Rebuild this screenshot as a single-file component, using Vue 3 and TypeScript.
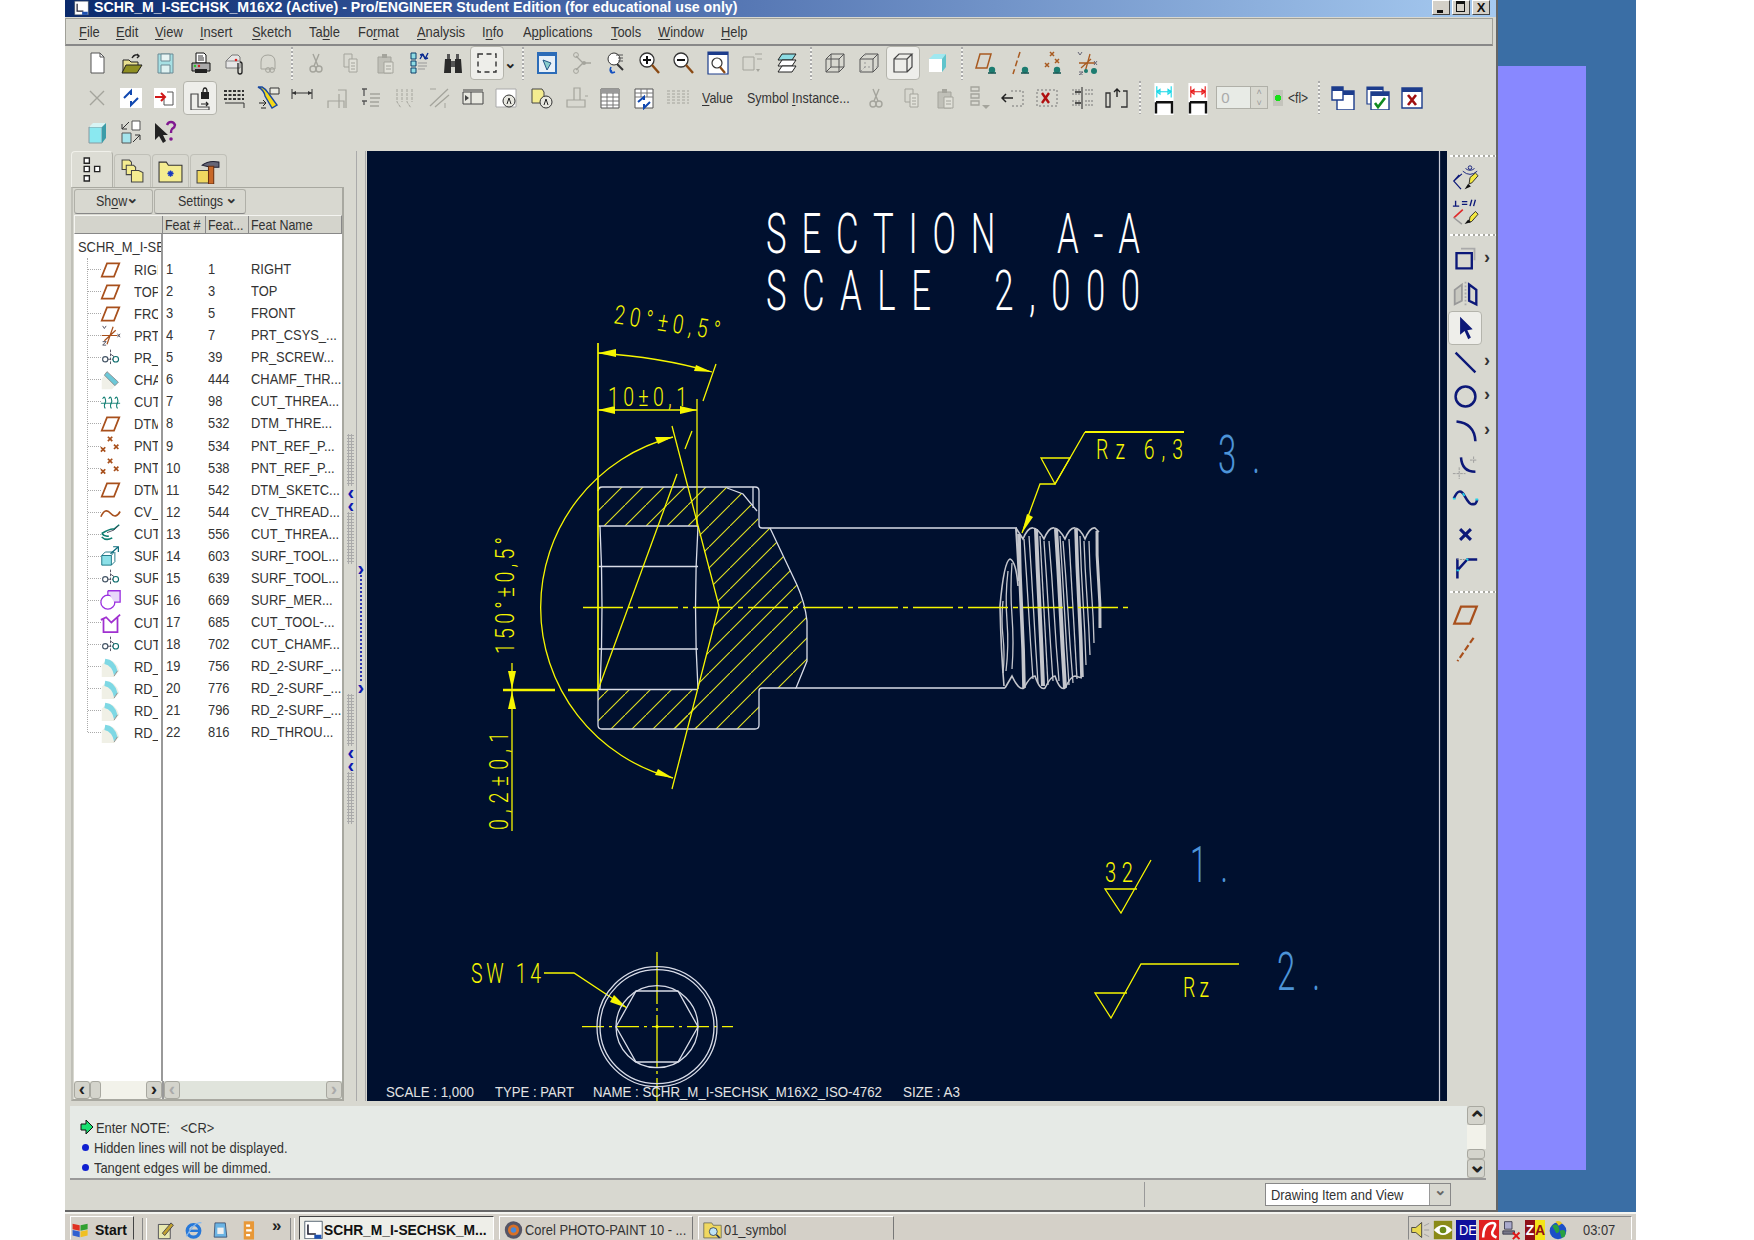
<script setup lang="ts">
import { computed } from "vue";

type BarItem = { k: string; n?: string; t?: string; sel?: boolean };

const icon = (n: string, sel = false): BarItem => ({ k: "i", n, sel });
const sep: BarItem = { k: "s" };

const menus = [
  ["", "F", "ile"], ["", "E", "dit"], ["", "V", "iew"], ["", "I", "nsert"], ["", "S", "ketch"],
  ["Ta", "b", "le"], ["Fo", "r", "mat"], ["", "A", "nalysis"], ["I", "n", "fo"],
  ["A", "p", "plications"], ["", "T", "ools"], ["", "W", "indow"], ["", "H", "elp"],
];

const row1: BarItem[] = [
  icon("new"), icon("open"), icon("save"), icon("print"), icon("mailclip"), icon("mailgray"), sep,
  icon("cut"), icon("copy"), icon("paste"), icon("tree"), icon("binoc"), icon("dash", true), { k: "c" }, sep,
  icon("refit"), icon("node"), icon("spin"), icon("zoomin"), icon("zoomout"), icon("zoomfit"), icon("annot"), icon("layers"), sep,
  icon("wire"), icon("hidden"), icon("nohid", true), icon("shade"), sep,
  icon("vplane"), icon("vaxis"), icon("vpoint"), icon("vcsys"),
];
const row2: BarItem[] = [
  icon("x"), icon("regen"), icon("redarrow"), icon("lock", true), icon("dotsrow"), icon("flash"), icon("dimh"), icon("dimd"),
  icon("ab"), icon("thread"), icon("slash"), icon("frame"), icon("note"), icon("foldera"), icon("datumt"), icon("table"),
  icon("tableref"), icon("rows"),
  { k: "t", t: "Value", n: "V" }, { k: "t", t: "Symbol Instance..." },
  icon("cut"), icon("copy"), icon("paste"), icon("stack"), icon("moveleft"), icon("delbox"), icon("align"), icon("bracket"), sep,
  icon("hcyan"), icon("hred"), { k: "spin" }, { k: "led" }, { k: "fl" }, sep,
  icon("winnew"), icon("wincheck"), icon("winx"),
];
const row3 = [icon("cube"), icon("resize"), icon("help")];

const tabs = ["tree3", "folders", "foldstar", "hammer"];

const rows = [
  ["RIGHT", 1, 1, "RIGHT", "plane"], ["TOP_", 2, 3, "TOP", "plane"], ["FRONT", 3, 5, "FRONT", "plane"],
  ["PRT_CSYS", 4, 7, "PRT_CSYS_...", "csys"], ["PR_SCREW", 5, 39, "PR_SCREW...", "group"],
  ["CHAMF", 6, 444, "CHAMF_THR...", "chamf"], ["CUT_T", 7, 98, "CUT_THREA...", "cthread"],
  ["DTM_T", 8, 532, "DTM_THRE...", "plane"], ["PNT_R", 9, 534, "PNT_REF_P...", "pnts"],
  ["PNT_R", 10, 538, "PNT_REF_P...", "pnts"], ["DTM_S", 11, 542, "DTM_SKETC...", "plane"],
  ["CV_TH", 12, 544, "CV_THREAD...", "curve"], ["CUT_T", 13, 556, "CUT_THREA...", "helix"],
  ["SURF_", 14, 603, "SURF_TOOL...", "surf"], ["SURF_", 15, 639, "SURF_TOOL...", "group"],
  ["SURF_", 16, 669, "SURF_MER...", "merge"], ["CUT_T", 17, 685, "CUT_TOOL-...", "cuttool"],
  ["CUT_C", 18, 702, "CUT_CHAMF...", "group"], ["RD_2-", 19, 756, "RD_2-SURF_...", "round"],
  ["RD_2-", 20, 776, "RD_2-SURF_...", "round"], ["RD_2-", 21, 796, "RD_2-SURF_...", "round"],
  ["RD_TH", 22, 816, "RD_THROU...", "round"],
] as [string, number, number, string, string][];

const sideTools = [
  { k: "g1" }, { n: "sketchint" }, { n: "sketchcon" }, { k: "g2" },
  { n: "sbox", more: true }, { n: "smirror" }, { n: "sarrow", sel: true }, { n: "sline", more: true },
  { n: "scircle", more: true }, { n: "sarc", more: true }, { n: "sfillet" }, { n: "sspline" }, { n: "spoint" },
  { n: "schamfer" }, { k: "g3" }, { n: "plane" }, { n: "saxis" },
];

const messages = ["Hidden lines will not be displayed.", "Tangent edges will be dimmed."];

const quick = ["qnote", "qie", "qwin", "qbar"];
const tray = ["tspeak", "tnv", "tde", "tav", "tpc", "tza", "tglobe"];

// drawing text: x, baseline y, font size, horizontal squeeze, rotation, overall width
type Label = { t: string; x: number; y: number; s: number; sx: number; r?: number; w: number; c: string };
const white = "#ffffff";
const yellow = "#f6f600";
const blue = "#4d94d8";
const labels: Label[] = [
  { t: "SECTION\u00a0\u00a0A-A", x: 766, y: 252, s: 56, sx: 0.62, w: 374, c: white },
  { t: "SCALE\u00a0\u00a02,000", x: 766, y: 309, s: 56, sx: 0.62, w: 374, c: white },
  { t: "20°±0,5°", x: 613, y: 322, s: 26, sx: 0.75, r: 9, w: 107, c: yellow },
  { t: "10±0,1", x: 608, y: 405, s: 26, sx: 0.75, w: 79, c: yellow },
  { t: "150°±0,5°", x: 514, y: 653, s: 26, sx: 0.75, r: -90, w: 117, c: yellow },
  { t: "0,2±0,1", x: 508, y: 829, s: 26, sx: 0.75, r: -90, w: 98, c: yellow },
  { t: "Rz\u00a06,3", x: 1096, y: 458, s: 27, sx: 0.72, w: 87, c: yellow },
  { t: "3.", x: 1218, y: 472, s: 53, sx: 0.62, w: 42, c: blue },
  { t: "32", x: 1105, y: 881, s: 28, sx: 0.72, w: 28, c: yellow },
  { t: "1.", x: 1190, y: 881, s: 50, sx: 0.62, w: 38, c: blue },
  { t: "2.", x: 1277, y: 989, s: 53, sx: 0.62, w: 43, c: blue },
  { t: "Rz", x: 1183, y: 996, s: 27, sx: 0.72, w: 26, c: yellow },
  { t: "SW\u00a014", x: 471, y: 982, s: 27, sx: 0.72, w: 70, c: yellow },
];
const footer = [
  { t: "SCALE : 1,000", x: 386, w: 88 },
  { t: "TYPE : PART", x: 495, w: 79 },
  { t: "NAME : SCHR_M_I-SECHSK_M16X2_ISO-4762", x: 593, w: 289 },
  { t: "SIZE : A3", x: 903, w: 57 },
];

const labelTransform = (l: Label) =>
  `translate(${l.x} ${l.y}) rotate(${l.r || 0}) scale(${l.sx} 1)`;

// helical thread, crest and flank lines running down the shank
const threadLines = computed(() => {
  const crest = [
    [1019, 533, 1024, 687, 3.6], [1036, 528, 1043, 685, 4], [1056, 528, 1065, 687, 4],
    [1076, 528, 1082, 676, 3.6], [1097, 530, 1100, 627, 3],
  ];
  const flank = [
    [1024, 538, 1033, 678], [1029, 535, 1038, 682], [1044, 540, 1053, 680], [1049, 540, 1059, 680],
    [1063, 540, 1073, 682], [1069, 538, 1077, 678], [1084, 540, 1090, 654], [1089, 540, 1094, 642],
    [1008, 570, 1006, 670], [1012, 562, 1012, 668], [1003, 600, 1003, 672], [1040, 535, 1048, 684],
    [1060, 535, 1069, 684], [1080, 535, 1086, 664],
  ];
  const wobble = (x1: number, y1: number, x2: number, y2: number) => {
    const mx = (x1 + x2) / 2;
    const my = (y1 + y2) / 2;
    return `M${x1} ${y1} Q${mx - 2} ${(y1 + my) / 2} ${mx} ${my} T${x2} ${y2}`;
  };
  return [
    ...crest.map((c) => ({ d: wobble(c[0], c[1], c[2], c[3]), w: c[4] })),
    ...flank.map((f) => ({ d: wobble(f[0], f[1], f[2], f[3]), w: 1.3 })),
  ];
});
</script>

<template>
  <div class="page">
    <!-- icon sprite -->
    <svg class="sprite" aria-hidden="true">
      <defs>
        <symbol id="new" viewBox="0 0 24 24"><path d="M6 2h9l4 4v16H6z" fill="#fff" stroke="#555" /><path d="M15 2v4h4" fill="none" stroke="#555" /></symbol>
        <symbol id="open" viewBox="0 0 24 24"><path d="M4 21V9h6l2 2h7v3" fill="#e8e090" stroke="#222" /><path d="M3 22l4-8h16l-5 8z" fill="#8f8f22" stroke="#222" /><path d="M13 7q3-5 7-2m-2-2l2 2-2 2" fill="none" stroke="#222" stroke-width="1.4" /></symbol>
        <symbol id="save" viewBox="0 0 24 24"><path d="M5 3h15v19H5z" fill="#a6e0e4" stroke="#6c8a94" /><path d="M8 3h9v7H8z" fill="#e8f4f4" stroke="#6c8a94" /><path d="M8 14h9v8H8z" fill="#dff2f2" stroke="#6c8a94" /></symbol>
        <symbol id="print" viewBox="0 0 24 24"><path d="M8 2h8l2 2v8H8z" fill="#fff" stroke="#111" /><path d="M10 5h5M10 7h6M10 9h6" stroke="#333" /><path d="M4 12h18v8H4z" fill="#aaa" stroke="#111" /><path d="M7 18h12v4H7z" fill="#222" /><circle cx="7" cy="15" r="1.2" fill="#2c2" /><circle cx="11" cy="15" r="1.2" fill="#c22" /></symbol>
        <symbol id="mailclip" viewBox="0 0 24 24"><path d="M4 10l6-6h6l2 2v11H4z" fill="#e6e6e6" stroke="#777" /><path d="M4 10h14" stroke="#888" /><circle cx="14" cy="9" r="1.3" fill="#d22" /><path d="M16 12v9q0 2 2 2t2-2v-8q0-2-2-2" fill="none" stroke="#222" stroke-width="1.3" /></symbol>
        <symbol id="mailgray" viewBox="0 0 24 24"><path d="M5 11q0-7 7-7t7 7v7H5z" fill="none" stroke="#a4a49c" /><circle cx="12" cy="19" r="2.4" fill="none" stroke="#a4a49c" /><circle cx="16" cy="19" r="2.4" fill="none" stroke="#a4a49c" /></symbol>
        <symbol id="cut" viewBox="0 0 24 24"><path d="M9 3l5 12M15 3l-5 12" stroke="#a4a49c" stroke-width="1.4" /><circle cx="9" cy="18" r="3" fill="none" stroke="#a4a49c" stroke-width="1.4" /><circle cx="15" cy="18" r="3" fill="none" stroke="#a4a49c" stroke-width="1.4" /></symbol>
        <symbol id="copy" viewBox="0 0 24 24"><path d="M6 3h8v13H6z" fill="#d8d8d0" stroke="#a4a49c" /><path d="M11 8h8v13h-8z" fill="#e0e0d8" stroke="#a4a49c" /><path d="M13 12h4M13 15h4M13 18h4" stroke="#a4a49c" /></symbol>
        <symbol id="paste" viewBox="0 0 24 24"><path d="M5 6h13v16H5z" fill="#c0c0b8" stroke="#a4a49c" /><path d="M9 3h5v4H9z" fill="#a4a49c" /><path d="M11 11h9v11h-9z" fill="#e0e0d8" stroke="#a4a49c" /><path d="M13 15h5M13 18h5" stroke="#a4a49c" /></symbol>
        <symbol id="tree" viewBox="0 0 24 24"><path d="M4 2h5v6H4zM4 10h5v5H4zM4 17h5v5H4z" fill="#8fdce4" stroke="#0b3f6a" /><path d="M11 12h9M11 15h9M11 18h7" stroke="#999" /><path d="M13 8l3-5M16 3l-3 1M16 3l1 3M21 2l-3 6M18 8l3-1M18 8l-1-3" stroke="#0a2a90" stroke-width="1.4" fill="none" /></symbol>
        <symbol id="binoc" viewBox="0 0 24 24"><path d="M4 8h6v14H3zM14 8h6l1 14h-7z" fill="#2a2a2a" /><path d="M6 3h3v5H6zM15 3h3v5h-3zM10 10h4v6h-4z" fill="#555" /></symbol>
        <symbol id="dash" viewBox="0 0 24 24"><path d="M3 3h18v18H3z" fill="none" stroke="#333" stroke-width="1.4" stroke-dasharray="5 3.5" /></symbol>
        <symbol id="refit" viewBox="0 0 24 24"><path d="M2 1h20v22H2z" fill="#2c6cb8" /><path d="M4 5h16v16H4z" fill="#e8f0f8" /><path d="M8 9l8 3-4 7z" fill="#8cc" stroke="#258" /></symbol>
        <symbol id="node" viewBox="0 0 24 24"><path d="M6 5l7 7M6 19l7-7h8" stroke="#a4a49c" stroke-width="1.3" fill="none" /><circle cx="6" cy="4" r="2.4" fill="none" stroke="#a4a49c" /><circle cx="6" cy="20" r="2.4" fill="none" stroke="#a4a49c" /><circle cx="14" cy="12" r="2" fill="#a4a49c" /></symbol>
        <symbol id="spin" viewBox="0 0 24 24"><circle cx="10" cy="8" r="6" fill="#fff" stroke="#333" /><path d="M13 13l6 6" stroke="#333" stroke-width="2" /><path d="M12 4h7M14 7h5M14 10h5" stroke="#555" /><path d="M7 16q-2 4 1 6m0 0l-1-3m1 3l3-1" stroke="#1450c0" stroke-width="1.6" fill="none" /></symbol>
        <symbol id="zoomin" viewBox="0 0 24 24"><circle cx="9" cy="9" r="7" fill="#fff" stroke="#333" stroke-width="1.3" /><path d="M5 9h8M9 5v8" stroke="#111" stroke-width="2" /><path d="M14 14l7 8" stroke="#8a4a14" stroke-width="2.4" /></symbol>
        <symbol id="zoomout" viewBox="0 0 24 24"><circle cx="9" cy="9" r="7" fill="#fff" stroke="#333" stroke-width="1.3" /><path d="M5 9h8" stroke="#111" stroke-width="2" /><path d="M14 14l7 8" stroke="#8a4a14" stroke-width="2.4" /></symbol>
        <symbol id="zoomfit" viewBox="0 0 24 24"><path d="M2 1h20v22H2z" fill="#fff" stroke="#1c3c8c" stroke-width="1.2" /><path d="M2 1h20v3H2z" fill="#1c3c8c" /><circle cx="11" cy="12" r="5" fill="#fff" stroke="#333" stroke-width="1.2" /><path d="M14 16l5 6" stroke="#8a4a14" stroke-width="2.2" /></symbol>
        <symbol id="annot" viewBox="0 0 24 24"><path d="M3 6h11v13H3z" fill="none" stroke="#a4a49c" /><path d="M15 3h7M17 8h5" stroke="#a4a49c" /><path d="M16 18l2 3 2-3z" fill="#a4a49c" /></symbol>
        <symbol id="layers" viewBox="0 0 24 24"><path d="M7 3h14l-4 6H3z" fill="#8cdce4" stroke="#222" /><path d="M7 9h14l-4 6H3z" fill="#fff" stroke="#222" /><path d="M7 15h14l-4 6H3z" fill="#fff" stroke="#222" /></symbol>
        <symbol id="wire" viewBox="0 0 24 24"><path d="M3 8h13v13H3zM3 8l5-5h13l-5 5M21 3v13l-5 5M8 3v13h13M8 16l-5 5" fill="none" stroke="#555" /></symbol>
        <symbol id="hidden" viewBox="0 0 24 24"><path d="M3 8h13v13H3zM3 8l5-5h13l-5 5M21 3v13l-5 5" fill="none" stroke="#555" /><path d="M8 3v13h13M8 16l-5 5" fill="none" stroke="#999" stroke-dasharray="2 2" /></symbol>
        <symbol id="nohid" viewBox="0 0 24 24"><path d="M3 8h13v13H3zM3 8l5-5h13l-5 5M21 3v13l-5 5" fill="none" stroke="#444" stroke-width="1.2" /></symbol>
        <symbol id="shade" viewBox="0 0 24 24"><path d="M4 8h13v13H4z" fill="#fff" /><path d="M4 8l5-5h12l-4 5z" fill="#a0e8f0" /><path d="M17 8l4-5v13l-4 5z" fill="#60c4cc" /></symbol>
        <symbol id="vplane" viewBox="0 0 24 24"><path d="M6 3h11l-4 14H2z" fill="none" stroke="#a85a20" stroke-width="1.5" /><circle cx="18" cy="19" r="3.2" fill="#1c7c70" /><path d="M14 22h8" stroke="#1c5c58" stroke-width="1.6" /></symbol>
        <symbol id="vaxis" viewBox="0 0 24 24"><path d="M12 1l-7 22" stroke="#a85a20" stroke-width="1.5" stroke-dasharray="6 3" /><circle cx="17" cy="19" r="3.2" fill="#1c7c70" /><path d="M13 22h8" stroke="#1c5c58" stroke-width="1.6" /></symbol>
        <symbol id="vpoint" viewBox="0 0 24 24"><path d="M8 1l4 4M12 1L8 5M13 8l4 4M17 8l-4 4M3 12l4 4M7 12l-4 4" stroke="#a85a20" stroke-width="1.5" /><circle cx="15" cy="19" r="3.2" fill="#1c7c70" /><path d="M11 22h8" stroke="#1c5c58" stroke-width="1.6" /></symbol>
        <symbol id="vcsys" viewBox="0 0 24 24"><path d="M14 3l-5 18M3 12h16M5 17l10-9" stroke="#a85a20" stroke-width="1.3" /><path d="M2 1l2 3 2-3M3 21h4l-4 3h4M18 10l3 4M21 10l-3 4" stroke="#667" fill="none" /><circle cx="18" cy="20" r="3" fill="#1c7c70" /><circle cx="10" cy="20" r="2" fill="#1c7c70" /></symbol>
        <symbol id="x" viewBox="0 0 24 24"><path d="M5 5l14 14M19 5L5 19" stroke="#a4a49c" stroke-width="1.4" /></symbol>
        <symbol id="regen" viewBox="0 0 24 24"><path d="M1 2h22v20H1z" fill="#fff" /><path d="M5 12l7-7v4M19 12l-7 7v-4" stroke="#1048b0" stroke-width="2" fill="none" /></symbol>
        <symbol id="redarrow" viewBox="0 0 24 24"><path d="M1 2h22v20H1z" fill="#fff" /><path d="M14 6h6v13h-9v-6" fill="none" stroke="#555" /><path d="M2 11h9M8 7l4 4-4 4" stroke="#d01818" stroke-width="2" fill="none" /></symbol>
        <symbol id="lock" viewBox="0 0 24 24"><path d="M3 8h7v13h11v3H3z" fill="none" stroke="#444" stroke-width="1.2" /><path d="M13 6h8v7h-8z" fill="#222" /><path d="M15 6q0-4 2-4t2 4" stroke="#222" fill="none" stroke-width="1.3" /><path d="M13 18h7M18 16l2 2-2 2" stroke="#222" stroke-width="1.2" fill="none" /></symbol>
        <symbol id="dotsrow" viewBox="0 0 24 24"><path d="M2 5h20M2 9h20M2 13h20" stroke="#333" stroke-width="2" stroke-dasharray="3 1.5" /><path d="M3 17h19v5" fill="none" stroke="#333" /></symbol>
        <symbol id="flash" viewBox="0 0 24 24"><path d="M2 1q6 3 7 9l7 12 5-3-8-11q-3-5-7-7z" fill="#f4d818" stroke="#1848a0" stroke-width="1.4" /><path d="M14 2h9v6h-9z" fill="#e8e8e0" stroke="#333" /><path d="M3 17h7M7 14l3 3-3 3M5 22h5" stroke="#222" fill="none" /></symbol>
        <symbol id="dimh" viewBox="0 0 24 24"><path d="M2 3v10M22 3v10M2 7h20" stroke="#333" /><path d="M2 7l4-2v4zM22 7l-4-2v4z" fill="#333" /></symbol>
        <symbol id="dimd" viewBox="0 0 24 24"><path d="M4 22v-7h16v7M14 4h8v18M15 22V8" fill="none" stroke="#a4a49c" stroke-width="1.2" /></symbol>
        <symbol id="ab" viewBox="0 0 24 24"><path d="M3 3h5M5 3v7M3 15h5M5 15v4" stroke="#555" stroke-width="1.3" /><path d="M11 8h10M11 12h10M11 16h9M11 20h9" stroke="#a4a49c" stroke-width="1.3" /></symbol>
        <symbol id="thread" viewBox="0 0 24 24"><path d="M4 3v13l4 6M9 3v13M14 3v13l4 6M19 3v13" stroke="#a4a49c" fill="none" stroke-dasharray="3 1" /></symbol>
        <symbol id="slash" viewBox="0 0 24 24"><path d="M3 20L21 3M8 21L22 9" stroke="#a4a49c" stroke-width="1.3" /><path d="M3 3h6M18 17v5" stroke="#a4a49c" /></symbol>
        <symbol id="frame" viewBox="0 0 24 24"><path d="M2 6h20v12H2z" fill="#e8e8e0" stroke="#444" /><path d="M10 6v12M2 4h20" stroke="#444" /><path d="M4 9l4 3-4 3z" fill="#444" /></symbol>
        <symbol id="note" viewBox="0 0 24 24"><path d="M1 3h20v18H1z" fill="#fff" stroke="#aaa" /><circle cx="14" cy="15" r="6" fill="#e8e8e0" stroke="#333" /><path d="M12 18l2-6 2 6" stroke="#222" fill="none" /></symbol>
        <symbol id="foldera" viewBox="0 0 24 24"><path d="M2 3h10l2 3v11H2z" fill="#f4ec90" stroke="#444" /><circle cx="16" cy="16" r="6" fill="#e8e8e0" stroke="#333" /><path d="M14 19l2-6 2 6" stroke="#222" fill="none" /></symbol>
        <symbol id="datumt" viewBox="0 0 24 24"><path d="M10 2h6v12h-6zM3 14h18v7H3z" fill="none" stroke="#a4a49c" stroke-width="1.2" /><path d="M21 10h3" stroke="#a4a49c" /></symbol>
        <symbol id="table" viewBox="0 0 24 24"><path d="M3 3h18v19H3z" fill="#fff" stroke="#555" /><path d="M3 7h18M3 11h18M3 15h18M3 19h18M9 3v19M15 3v19" stroke="#777" /><path d="M3 3h18v4H3z" fill="#999" /></symbol>
        <symbol id="tableref" viewBox="0 0 24 24"><path d="M3 3h18v19H3z" fill="#fff" stroke="#555" /><path d="M3 7h18M3 11h18M9 3v8M15 3v8" stroke="#777" /><path d="M6 16l6-5v3M18 16l-6 6v-4" stroke="#1048b0" stroke-width="2" fill="none" /></symbol>
        <symbol id="rows" viewBox="0 0 24 24"><path d="M1 5h22M1 11h22M1 17h22M1 8h22M1 14h22" stroke="#a4a49c" stroke-dasharray="3 2" /></symbol>
        <symbol id="stack" viewBox="0 0 24 24"><path d="M4 1h8v4H4zM4 8h8v4H4zM4 15h8v4H4z" fill="none" stroke="#a4a49c" stroke-width="1.3" /><path d="M15 19l4 4 4-4z" fill="#a4a49c" /></symbol>
        <symbol id="moveleft" viewBox="0 0 24 24"><path d="M10 5h12v15H10" fill="none" stroke="#777" stroke-dasharray="2 2" /><path d="M1 12h11M5 8l-4 4 4 4" stroke="#222" stroke-width="1.5" fill="none" /></symbol>
        <symbol id="delbox" viewBox="0 0 24 24"><path d="M2 4h20v16H2z" fill="none" stroke="#777" stroke-dasharray="2 2" /><path d="M7 7l7 10M14 7L7 17" stroke="#b01010" stroke-width="2.4" /></symbol>
        <symbol id="align" viewBox="0 0 24 24"><path d="M2 4h8M15 4h8M2 8h8M15 8h8M2 15h8M15 15h8M2 19h8M15 19h8" stroke="#777" stroke-dasharray="2 1" /><path d="M12 1v22" stroke="#222" /><path d="M5 6h6M5 17h6" stroke="#222" stroke-width="1.4" /></symbol>
        <symbol id="bracket" viewBox="0 0 24 24"><path d="M2 7h4v14H2zM19 5h4v16h-6" fill="none" stroke="#333" stroke-width="1.3" /><path d="M13 11V3M10 6l3-3 3 3" stroke="#222" stroke-width="1.4" fill="none" /></symbol>
        <symbol id="hcyan" viewBox="0 0 24 40"><path d="M0 0h24v40H0z" fill="#fff" /><path d="M3 4v14M21 4v14M3 11h18M3 11l4-3v6zM21 11l-4-3v6z" stroke="#18d8e8" stroke-width="1.4" fill="none" /><path d="M2 24h20v14M2 38V24" stroke="#111" stroke-width="3" fill="none" /></symbol>
        <symbol id="hred" viewBox="0 0 24 40"><path d="M0 0h24v40H0z" fill="#fff" /><path d="M3 4v14M21 4v14M3 11h18M3 11l4-3v6zM21 11l-4-3v6z" stroke="#e81818" stroke-width="1.4" fill="none" /><path d="M2 24h20v14M2 38V24" stroke="#111" stroke-width="3" fill="none" /></symbol>
        <symbol id="winnew" viewBox="0 0 24 24"><path d="M6 5h17v19H6z" fill="#fff" stroke="#1c3c8c" stroke-width="1.4" /><path d="M6 5h17v4H6z" fill="#1c3c8c" /><path d="M1 1h11v13H1z" fill="#fff" stroke="#1c3c8c" stroke-width="1.4" /><path d="M1 1h11v4H1z" fill="#1c3c8c" /></symbol>
        <symbol id="wincheck" viewBox="0 0 24 24"><path d="M1 1h16v17H1z" fill="#fff" stroke="#1c3c8c" stroke-width="1.2" /><path d="M1 1h16v3H1z" fill="#1c3c8c" /><path d="M5 6h18v18H5z" fill="#fff" stroke="#1c3c8c" stroke-width="1.4" /><path d="M5 6h18v4H5z" fill="#1c3c8c" /><path d="M9 17l3 4 7-9" stroke="#108a20" stroke-width="2.6" fill="none" /></symbol>
        <symbol id="winx" viewBox="0 0 24 24"><path d="M2 2h20v20H2z" fill="#fff" stroke="#1c3c8c" stroke-width="1.4" /><path d="M2 2h20v4H2z" fill="#1c3c8c" /><path d="M8 9l8 10M16 9L8 19" stroke="#a01010" stroke-width="2.6" /></symbol>
        <symbol id="cube" viewBox="0 0 24 24"><path d="M4 7h13v16H4z" fill="#8ae8f0" stroke="#8899a0" /><path d="M4 7l4-4h13l-4 4z" fill="#d8f4f4" /><path d="M17 7l4-4v15l-4 5z" fill="#3c9ca8" /></symbol>
        <symbol id="resize" viewBox="0 0 24 24"><path d="M13 1h8v9h-8z" fill="#fff" stroke="#555" /><path d="M3 13h9v10H3z" fill="#a4e4ec" stroke="#555" /><path d="M10 2L3 9M3 4v5h5M14 22l7-7M21 20v-5h-5" stroke="#333" fill="none" /></symbol>
        <symbol id="help" viewBox="0 0 24 24"><path d="M2 3v17l4-4 4 7 3-2-3-6h5z" fill="#222" /><path d="M14 5q1-3 4-3t4 3q0 2-3 4-1 1-1 4" stroke="#801890" stroke-width="2.4" fill="none" /><circle cx="18" cy="19" r="1.8" fill="#801890" /></symbol>
        <!-- panel tabs -->
        <symbol id="tree3" viewBox="0 0 24 24"><path d="M4 1h5v5H4zM4 9h5v5H4zM4 18h5v5H4zM14 9h5v5h-5z" fill="#fff" stroke="#222" stroke-width="1.3" /></symbol>
        <symbol id="folders" viewBox="0 0 24 24"><path d="M2 1h7l2 2v7H2z" fill="#f4ec90" stroke="#444" /><path d="M6 6h7l2 2v7H6z" fill="#f4ec90" stroke="#444" /><path d="M11 11h7l4 2v9H11z" fill="#f4ec90" stroke="#444" /></symbol>
        <symbol id="foldstar" viewBox="0 0 24 24"><path d="M1 3h7l2 3h13v16H1z" fill="#f4ec90" stroke="#333" /><path d="M9 14h6M12 11v6M10 12l4 4M14 12l-4 4" stroke="#1838c0" stroke-width="1.4" /></symbol>
        <symbol id="hammer" viewBox="0 0 24 24"><path d="M1 11h14v12H1z" fill="#f0d860" stroke="#444" /><path d="M6 6q6-5 16-3v5h-8q-4-1-8-2z" fill="#667" stroke="#223" /><path d="M12 7h5v17h-5z" fill="#c86828" stroke="#6a3010" /></symbol>
        <!-- tree rows -->
        <symbol id="plane" viewBox="0 0 24 24"><path d="M8 5h14l-6 15H2z" fill="none" stroke="#a8501c" stroke-width="2" /></symbol>
        <symbol id="csys" viewBox="0 0 24 24"><path d="M15 2L8 22M2 12h18M5 18L18 6" stroke="#a8501c" stroke-width="1.4" /><path d="M3 1l2 3 2-3M3 19h4l-4 4h4M20 10l3 4M23 10l-3 4" stroke="#445" fill="none" /></symbol>
        <symbol id="group" viewBox="0 0 24 24"><circle cx="6" cy="14" r="3" fill="none" stroke="#456" stroke-width="1.3" /><circle cx="18" cy="14" r="3.2" fill="none" stroke="#0c6c6c" stroke-width="1.3" /><path d="M9 14h6M12 3v18" stroke="#445" stroke-dasharray="3 1.5" /><path d="M12 8l4 3" stroke="#445" /></symbol>
        <symbol id="chamf" viewBox="0 0 24 24"><path d="M2 11l6-7 12 12-6 7H2z" fill="#f0f0e8" /><path d="M8 3l-3 4 12 12 4-4z" fill="#6cc8d8" stroke="#888" /></symbol>
        <symbol id="cthread" viewBox="0 0 24 24"><path d="M3 9q2-4 3 0t0 4q-2 4 0 7M10 9q2-4 3 0t0 4q-2 4 0 7M17 9q2-4 3 0t0 4q-2 4 0 7" fill="none" stroke="#0c7c70" stroke-width="1.2" /><path d="M1 14h22" stroke="#0c7c70" /></symbol>
        <symbol id="pnts" viewBox="0 0 24 24"><path d="M9 2l5 5M14 2L9 7M1 14l5 5M6 14l-5 5M16 11l5 5M21 11l-5 5" stroke="#a8501c" stroke-width="2" /></symbol>
        <symbol id="curve" viewBox="0 0 24 24"><path d="M1 18q5-11 11-4t11-2" fill="none" stroke="#a8501c" stroke-width="1.8" /></symbol>
        <symbol id="helix" viewBox="0 0 24 24"><path d="M2 12q10-6 14-5l6-5M2 12q3 4 8 3M2 16q5 5 12 1" fill="none" stroke="#0c7c70" stroke-width="1.8" /><path d="M8 11l8-3M16 8l5-5" stroke="#445" /></symbol>
        <symbol id="surf" viewBox="0 0 24 24"><path d="M2 12h11v11H2z" fill="#8ce0e8" stroke="#0c6c7c" /><path d="M2 12l4-4h10l-3 4M13 23l4-4V8" fill="none" stroke="#0c6c7c" /><path d="M12 10l9-8M15 2h6v6" fill="none" stroke="#0c6c7c" stroke-width="1.4" /></symbol>
        <symbol id="merge" viewBox="0 0 24 24"><circle cx="9" cy="15" r="8" fill="none" stroke="#9a30e0" stroke-width="1.5" /><path d="M9 2h14v13H16" fill="#e8d8fa" stroke="#9a30e0" stroke-width="1.5" /><path d="M9 2v6" stroke="#9a30e0" stroke-width="1.5" /></symbol>
        <symbol id="cuttool" viewBox="0 0 24 24"><path d="M4 7v16h16V5M1 9l6-3 6 6 10-9" fill="none" stroke="#a030d0" stroke-width="2" /></symbol>
        <symbol id="round" viewBox="0 0 24 24"><path d="M2 10l6-6q10 0 14 13l-6 7H2z" fill="#f0f0e6" /><path d="M6 3q11 1 14 14l-4 5q-2-11-11-13z" fill="#7ed8e4" /><path d="M20 17l-4 6" stroke="#888" /></symbol>
        <!-- right strip -->
        <symbol id="sketchint" viewBox="0 0 30 30"><path d="M8 12l-6 7 8 9M2 19l9-8" stroke="#0c1878" fill="none" stroke-width="1.4" /><path d="M12 8q8 7 16 0M15 5q5 4 10 0" stroke="#0c1878" fill="none" /><circle cx="20" cy="4" r="2" fill="none" stroke="#0c1878" /><path d="M20 15l6-5 3 3-7 8-3 1z" fill="#f4e840" stroke="#222" /><path d="M14 28l4-6 3 3z" fill="#111" /></symbol>
        <symbol id="sketchcon" viewBox="0 0 30 30"><path d="M1 9h7M4 3v6M11 4h6M11 7h6M22 2l-2 7M26 2l-2 7" stroke="#0c1878" stroke-width="1.5" /><path d="M2 22l10-9" stroke="#e02828" stroke-width="1.8" /><path d="M2 22l9 7" stroke="#999" stroke-width="1.6" /><path d="M20 21l6-6 3 3-7 8-3 1z" fill="#f4e840" stroke="#222" /><path d="M14 29l4-5 3 3z" fill="#111" /></symbol>
        <symbol id="sbox" viewBox="0 0 30 30"><path d="M10 4h15v13" fill="none" stroke="#aaa" stroke-width="2" /><path d="M5 9h17v17H5z" fill="none" stroke="#0c1878" stroke-width="2.6" /></symbol>
        <symbol id="smirror" viewBox="0 0 30 30"><path d="M3 11l8-6v18l-8 4z" fill="#c8c8c0" stroke="#999" stroke-width="2" /><path d="M19 5l8 6v16l-8-4z" fill="none" stroke="#0c1878" stroke-width="2.6" /><path d="M15 2v26" stroke="#aaa" stroke-width="2" stroke-dasharray="2 2" /></symbol>
        <symbol id="sarrow" viewBox="0 0 30 30"><path d="M9 3l14 14-6 1 4 8-3 2-4-9-5 4z" fill="#0c1878" /></symbol>
        <symbol id="sline" viewBox="0 0 30 30"><path d="M4 4l22 22" stroke="#0c1878" stroke-width="2.6" /></symbol>
        <symbol id="scircle" viewBox="0 0 30 30"><circle cx="15" cy="15" r="11" fill="none" stroke="#0c1878" stroke-width="2.8" /></symbol>
        <symbol id="sarc" viewBox="0 0 30 30"><path d="M5 5q20 2 21 22" fill="none" stroke="#0c1878" stroke-width="2.8" /></symbol>
        <symbol id="sfillet" viewBox="0 0 30 30"><path d="M10 6q1 16 16 16" fill="none" stroke="#0c1878" stroke-width="2.8" /><path d="M1 24h14M8 17v13M24 5v8M20 9h8" stroke="#999" stroke-dasharray="3 1" /></symbol>
        <symbol id="sspline" viewBox="0 0 30 30"><path d="M2 14q6-14 12-3t9 9q4 1 5-5" fill="none" stroke="#0c1878" stroke-width="2.8" /><path d="M1 14h3M12 8l2 3M26 15h3" stroke="#20d0e8" stroke-width="2" /></symbol>
        <symbol id="spoint" viewBox="0 0 30 30"><path d="M9 9l12 12M21 9L9 21" stroke="#0c1878" stroke-width="3.4" /></symbol>
        <symbol id="schamfer" viewBox="0 0 30 30"><path d="M6 4v22M6 17L17 5h11" fill="none" stroke="#0c1878" stroke-width="2.8" /><path d="M6 5h12" stroke="#888" stroke-dasharray="2 1" /><path d="M5 17h3M16 4l2 2" stroke="#20d0e8" stroke-width="2" /></symbol>
        <symbol id="saxis" viewBox="0 0 30 30"><path d="M24 2L6 28" stroke="#a8501c" stroke-width="2.4" stroke-dasharray="7 3" /></symbol>
        <!-- taskbar -->
        <symbol id="qnote" viewBox="0 0 24 24"><path d="M3 5h15v18H3z" fill="#e8e8b0" stroke="#334" /><path d="M8 16l11-13 3 3-11 13z" fill="#c0a030" stroke="#334" /></symbol>
        <symbol id="qie" viewBox="0 0 24 24"><circle cx="12" cy="13" r="8" fill="none" stroke="#2878d8" stroke-width="4" /><path d="M5 13h14" stroke="#2878d8" stroke-width="3" /><path d="M3 20Q14 0 22 3" fill="none" stroke="#84b8f0" stroke-width="1.5" /></symbol>
        <symbol id="qwin" viewBox="0 0 24 24"><path d="M5 3h13l2 18H4z" fill="#6cb4e4" stroke="#346" /><path d="M8 9h8v8H8z" fill="#f0f0f0" /></symbol>
        <symbol id="qbar" viewBox="0 0 24 24"><path d="M6 1h13v23H6z" fill="#e89838" /><path d="M9 5h5v3h-5zM9 11h7v3H9zM9 17h5v3H9z" fill="#fff" /></symbol>
        <symbol id="qapp" viewBox="0 0 24 24"><path d="M1 1h22v22H1z" fill="#fff" stroke="#345" /><path d="M5 5v12h10" fill="none" stroke="#223" stroke-width="2" /><path d="M13 18h9v5h-9z" fill="#1c50b0" /></symbol>
        <symbol id="qcorel" viewBox="0 0 24 24"><circle cx="12" cy="12" r="11" fill="#556" /><circle cx="12" cy="12" r="7" fill="#d87028" /><circle cx="12" cy="12" r="3.5" fill="#4888d8" /></symbol>
        <symbol id="qfold" viewBox="0 0 24 24"><path d="M1 3h10l2 3h10v16H1z" fill="#f0d860" stroke="#665" /><circle cx="13" cy="14" r="5" fill="#bfe4f4" stroke="#235" /><path d="M17 18l4 4" stroke="#235" stroke-width="2" /></symbol>
        <symbol id="qstart" viewBox="0 0 24 24"><path d="M2 4l9 2v7l-9-2z" fill="#e03020" /><path d="M12 6l9-2v7l-9 2z" fill="#30a030" /><path d="M2 12l9 2v7l-9-2z" fill="#3060d0" /><path d="M12 14l9-2v7l-9 2z" fill="#f0c020" /></symbol>
        <symbol id="tspeak" viewBox="0 0 24 24"><path d="M2 9h5l7-6v18l-7-6H2z" fill="#e8d850" stroke="#333" /><path d="M17 7l6-3M17 12h6M17 17l6 3" stroke="#999" /></symbol>
        <symbol id="tnv" viewBox="0 0 24 24"><path d="M1 1h22v22H1z" fill="#8a8a18" /><path d="M1 12q11-12 22 0q-11 12-22 0z" fill="#fff" /><circle cx="12" cy="12" r="4" fill="#6a8a18" /></symbol>
        <symbol id="tav" viewBox="0 0 24 24"><path d="M0 0h24v24H0z" fill="#e02020" /><path d="M5 21q0-15 9-17t3 8q-4 6 4 9" fill="none" stroke="#fff" stroke-width="3" /></symbol>
        <symbol id="tpc" viewBox="0 0 24 24"><path d="M3 2h9v9H3z" fill="#aac" stroke="#334" /><path d="M1 13h14v4H1z" fill="#778" stroke="#334" /><path d="M13 15l8 8M21 15l-8 8" stroke="#e01818" stroke-width="2.4" /></symbol>
        <symbol id="tglobe" viewBox="0 0 24 24"><circle cx="12" cy="13" r="10" fill="#1c50c8" /><path d="M5 7q6-4 8 2t-3 7zM14 13q7-3 7 3t-5 5z" fill="#28a040" /><path d="M9 2q5-2 8 2l-4 3z" fill="#e8c820" /></symbol>
      </defs>
    </svg>

    <div class="desktop">
      <div class="desk-row">
        <div class="app">
          <div class="titlebar">
            <svg class="title-ico"><use href="#qapp" /></svg>
            <span class="title-text">SCHR_M_I-SECHSK_M16X2 (Active) - Pro/ENGINEER Student Edition (for educational use only)</span>
            <div class="title-btns">
              <span class="tb"><i class="tb-min"></i></span>
              <span class="tb"><i class="tb-max"></i></span>
              <span class="tb tb-x">X</span>
            </div>
          </div>

          <div class="menubar">
            <span v-for="m in menus" :key="m[1] + m[2]" class="menu"><span class="sq">{{ m[0] }}<u>{{ m[1] }}</u>{{ m[2] }}</span></span>
          </div>

          <div class="toolbars">
            <div v-for="(row, ri) in [row1, row2, row3]" :key="ri" class="tbar">
              <template v-for="(it, i) in row" :key="i">
                <span v-if="it.k === 'i'" class="cell" :class="{ sel: it.sel }">
                  <svg :class="it.n === 'hcyan' || it.n === 'hred' ? 'tall' : 'ico'"><use :href="'#' + it.n" /></svg>
                </span>
                <span v-else-if="it.k === 's'" class="vsep"></span>
                <span v-else-if="it.k === 'c'" class="chev">&#8964;</span>
                <span v-else-if="it.k === 't'" class="bar-text" :class="{ 'bar-value': it.n }">
                  <span class="sq">
                    <template v-if="it.n"><u>V</u>alue</template>
                    <template v-else>Symbol <u>I</u>nstance...</template>
                  </span>
                </span>
                <span v-else-if="it.k === 'spin'" class="spinner"><span class="spin-val">0</span><span class="spin-btns"><i>&#708;</i><i>&#709;</i></span></span>
                <span v-else-if="it.k === 'led'" class="led"></span>
                <span v-else-if="it.k === 'fl'" class="fl"><span class="sq">&lt;fl&gt;</span></span>
              </template>
            </div>
          </div>

          <div class="main">
            <aside class="panel">
              <div class="tabs">
                <span v-for="(t, i) in tabs" :key="t" class="tab" :class="{ on: i === 0 }"><svg class="ico-tab"><use :href="'#' + t" /></svg></span>
              </div>
              <div class="panel-body">
                <div class="btnrow">
                  <span class="pbtn pbtn-show"><span class="sq">Sh<u>o</u>w</span><b>&#8964;</b></span>
                  <span class="pbtn pbtn-set"><span class="sq">Settings</span><b>&#8964;</b></span>
                </div>
                <div class="thead">
                  <span class="th th-tree"></span>
                  <span class="th th-num"><span class="sq">Feat #</span></span>
                  <span class="th th-id"><span class="sq">Feat...</span></span>
                  <span class="th th-name"><span class="sq">Feat Name</span></span>
                </div>
                <div class="list">
                  <div class="tree">
                    <div class="root"><span class="sq">SCHR_M_I-SECHSK_M16X2</span></div>
                    <div class="tree-rows">
                      <div v-for="r in rows" :key="r[1]" class="trow">
                        <svg class="ico-row"><use :href="'#' + r[4]" /></svg>
                        <span class="tname"><span class="sq">{{ r[0] }}</span></span>
                      </div>
                    </div>
                  </div>
                  <div class="cols">
                    <div class="root-gap"></div>
                    <div v-for="r in rows" :key="r[1]" class="crow">
                      <span class="c-num"><span class="sq">{{ r[1] }}</span></span>
                      <span class="c-id"><span class="sq">{{ r[2] }}</span></span>
                      <span class="c-name"><span class="sq">{{ r[3] }}</span></span>
                    </div>
                  </div>
                </div>
                <div class="hscrolls">
                  <div class="hs hs-left"><span class="sb">&#8249;</span><span class="sb thumb"></span><span class="track"></span><span class="sb">&#8250;</span></div>
                  <div class="hs hs-right"><span class="sb dim">&#8249;</span><span class="track flat"></span><span class="sb dim">&#8250;</span></div>
                </div>
              </div>
            </aside>

            <div class="splitter">
              <div class="lane lane-a">
                <span class="grip"></span>
                <span class="lch">&#8249;</span><span class="lch">&#8249;</span>
                <span class="grip"></span>
                <span class="lane-gap"></span>
                <span class="grip"></span>
                <span class="lch">&#8249;</span><span class="lch">&#8249;</span>
                <span class="grip"></span>
              </div>
              <div class="lane lane-b">
                <span class="lch">&#8250;</span>
                <span class="bluegrip"></span>
                <span class="lch">&#8250;</span>
              </div>
            </div>

            <svg class="drawing" viewBox="367 150 1080 950" width="1080" height="950">
              <defs>
                <pattern id="hatch" width="21" height="21" patternUnits="userSpaceOnUse" patternTransform="translate(16 0)">
                  <path d="M0 21L21 0" stroke="#e4e420" stroke-width="1.1" />
                </pattern>
              </defs>

              <!-- section hatching -->
              <path d="M598 486H698V525H598Z" fill="url(#hatch)" />
              <path d="M598 689H697V728H598Z" fill="url(#hatch)" />
              <path d="M698 486H727L743 493L757 510L759 527H770L797 584L807 620V660L796 687H759V724L755 728H660L697 689L719 605L697 525Z" fill="url(#hatch)" />

              <!-- bolt outline -->
              <g fill="none" stroke="#d8dce8" stroke-width="1.3">
                <path d="M598 490Q598 486 602 486H755Q759 486 759 490V524Q759 527 762 527H1017" />
                <path d="M727 487L743 493L757 510M753 486V507" />
                <path d="M770 527L797 584Q805 602 807 620V660L796 687H1005" />
                <path d="M796 687H762Q759 687 759 690V724Q759 728 755 728H602Q598 728 598 724V690" />
                <path d="M598 525H698M598 565.5H698M598 648H698M598 688.5H698" />
                <path d="M600 525Q604 606 600 688M698 525Q693 606 698 688" />
              </g>
              <path d="M1439.5 150V1100" stroke="#c8ccd8" stroke-width="1.2" />

              <!-- thread -->
              <g fill="none" stroke="#c4c6cc">
                <path d="M1016 527L1023 538Q1028 526 1033 527Q1038 527 1044 538Q1049 526 1054 527Q1059 527 1065 538Q1070 526 1075 527Q1080 527 1085 538Q1090 526 1095 527L1099 531" stroke-width="1.6" />
                <path d="M1005 687L1012 675Q1019 690 1024 687Q1030 675 1035 675Q1040 690 1045 687Q1051 675 1055 675Q1060 690 1065 687Q1071 675 1075 675L1082 677" stroke-width="1.6" />
                <path d="M1016 527Q1018 560 1019 580" stroke-width="2" />
                <path d="M1000 605Q1004 560 1010 558Q1016 560 1018 585" stroke-width="1.6" />
                <path d="M1000 605Q1001 650 1004 685" stroke-width="1.6" />
                <path v-for="(l, i) in threadLines" :key="i" :d="l.d" :stroke-width="l.w" />
              </g>

              <!-- dimensions and leaders -->
              <g fill="none" stroke="#f6f600" stroke-width="1.3">
                <path d="M598 342V689" stroke-width="1.7" />
                <path d="M697 398V525" />
                <path d="M598 352Q660 356 712 371" />
                <path d="M716 363L703 400M692 430L685 448" />
                <path d="M598 409H697" />
                <path d="M672 425L719 605L672 788" />
                <path d="M677 473L598 689" />
                <path d="M673 436A176 176 0 0 0 673 777" />
                <path d="M503 689H555M568 689H598" stroke-width="2.6" />
                <path d="M512 662V830" />
                <path d="M583 606.5H1130" stroke-dasharray="40 5 5 5" />
                <path d="M1085 431H1184" stroke-width="1.8" />
                <path d="M1085 431L1055 483H1040L1022 532" />
                <path d="M1041 457H1070L1055 483Z" />
                <path d="M1151 859L1121 912L1105 888H1137" />
                <path d="M1239 963H1141L1111 1017L1095 992H1127" />
                <path d="M582 1025.7H733" stroke-dasharray="22 5 3 5" />
                <path d="M657 951V1100" stroke-dasharray="52 4 3 4" />
                <path d="M544 972H574L627 1007" />
              </g>
              <g fill="#f6f600">
                <path d="M598 352L616 348V356Z" />
                <path d="M712 371L696 364L694 370Z" />
                <path d="M598 409L615 405V413Z" />
                <path d="M697 409L680 405V413Z" />
                <path d="M673 436L655 436L658 443Z" />
                <path d="M673 777L655 774L658 768Z" />
                <path d="M512 688L508 670H516Z" />
                <path d="M512 690L508 708H516Z" />
                <path d="M1022 532L1027 513L1033 516Z" />
                <path d="M627 1007L610 1001L614 994Z" />
              </g>

              <!-- end view -->
              <g fill="none" stroke="#d8dce8" stroke-width="1.3">
                <circle cx="657" cy="1025.7" r="60" />
                <circle cx="657" cy="1025.7" r="57" />
                <circle cx="657" cy="1025.7" r="41" />
                <path d="M616 1025.7L636 990H678L698 1025.7L678 1061H636Z" />
              </g>
              <circle cx="657" cy="1025.7" r="1.6" fill="#f6f600" />

              <!-- lettering -->
              <text
                v-for="l in labels"
                :key="l.t"
                class="cad"
                :transform="labelTransform(l)"
                :font-size="l.s"
                :fill="l.c"
                :textLength="l.w / l.sx"
                lengthAdjust="spacing"
              >{{ l.t }}</text>
              <text
                v-for="f in footer"
                :key="f.t"
                class="cad-foot"
                :x="f.x"
                y="1096"
                :textLength="f.w"
                lengthAdjust="spacingAndGlyphs"
              >{{ f.t }}</text>
            </svg>

            <div class="sidetools">
              <template v-for="(t, i) in sideTools" :key="i">
                <span v-if="t.k" class="sgrip" :class="t.k"></span>
                <span v-else class="stool" :class="{ sel: t.sel }">
                  <svg class="ico-side"><use :href="'#' + t.n" /></svg>
                  <em v-if="t.more">&#8250;</em>
                </span>
              </template>
            </div>
          </div>

          <div class="msgs">
            <div class="msg-list">
              <div class="msg">
                <svg class="msg-arrow" viewBox="0 0 14 16"><path d="M1 5h5V1l7 7-7 7v-4H1z" fill="#18e070" stroke="#111" /></svg>
                <span class="sq">Enter NOTE:&nbsp;&nbsp; &lt;CR&gt;</span>
              </div>
              <div v-for="m in messages" :key="m" class="msg"><i class="dot"></i><span class="sq">{{ m }}</span></div>
            </div>
            <div class="vscroll">
              <span class="sb up">&#8963;</span>
              <span class="vtrack"></span>
              <span class="vthumb"></span>
              <span class="sb dn">&#8964;</span>
            </div>
          </div>

          <div class="status">
            <span class="stat-cell"></span>
            <div class="combo"><span><span class="sq">Drawing Item and View</span></span><b>&#8964;</b></div>
          </div>
        </div>

        <div class="side"><div class="side-win"></div></div>
      </div>

      <div class="taskbar">
        <span class="start"><svg class="ico-q"><use href="#qstart" /></svg><span class="start-txt">Start</span></span>
        <span class="tsep"></span>
        <span class="quick">
          <svg v-for="q in quick" :key="q" class="ico-q"><use :href="'#' + q" /></svg>
          <span class="more">&#187;</span>
        </span>
        <span class="tsep"></span>
        <span class="task active"><svg class="ico-q"><use href="#qapp" /></svg><span class="sq-b">SCHR_M_I-SECHSK_M...</span></span>
        <span class="task corel"><svg class="ico-q"><use href="#qcorel" /></svg><span class="sq">Corel PHOTO-PAINT 10 - ...</span></span>
        <span class="task wide"><svg class="ico-q"><use href="#qfold" /></svg><span class="sq">01_symbol</span></span>
        <span class="tray">
          <template v-for="t in tray" :key="t">
            <span v-if="t === 'tde'" class="tray-de"><span class="sq">DE</span></span>
            <span v-else-if="t === 'tza'" class="tray-za"><i>Z</i><b>A</b></span>
            <svg v-else class="ico-t"><use :href="'#' + t" /></svg>
          </template>
          <span class="clock"><span class="sq">03:07</span></span>
        </span>
      </div>
    </div>
  </div>
</template>

<style>
html, body { margin: 0; background: #fff; overflow: hidden; }
</style>

<style scoped>
.page {
  width: 1754px;
  height: 1240px;
  background: #fff;
  font-family: "Liberation Sans", Arial, sans-serif;
  color: #333;
  overflow: hidden;
}
.sprite { width: 0; height: 0; display: block; }
u { text-underline-offset: 2px; }
/* the old UI font is tall and narrow, squeeze the text sideways */
.sq {
  display: inline-block;
  transform: scaleX(0.86);
  transform-origin: 0 50%;
  white-space: nowrap;
}

.desktop {
  margin-left: 65px;
  width: 1571px;
  height: 1240px;
  background: #3a6ea5;
  display: flex;
  flex-direction: column;
}
.desk-row { display: flex; height: 1212px; flex: none; }
.side { flex: 1; padding-top: 66px; }
.side-win { width: 88px; height: 1104px; background: #8888ff; }

.app {
  width: 1433px;
  height: 1212px;
  box-sizing: border-box;
  background: #d8d8d0;
  border-right: 2px solid #666;
  border-bottom: 2px solid #666;
  display: flex;
  flex-direction: column;
}

.titlebar {
  height: 17px;
  flex: none;
  display: flex;
  align-items: flex-start;
  background: linear-gradient(90deg, #0a2a6c 0%, #3c5ca0 30%, #a6caf0 100%);
  color: #fff;
}
.title-ico { width: 15px; height: 16px; margin: 0 5px 0 9px; flex: none; }
.title-text {
  display: inline-block;
  flex: none;
  width: 644px;
  font-weight: 700;
  font-size: 15px;
  line-height: 13px;
  white-space: nowrap;
  transform: scaleX(0.945);
  transform-origin: 0 50%;
}
.title-btns { margin-left: auto; margin-right: 6px; display: flex; gap: 2px; }
.tb {
  width: 18px;
  height: 15px;
  background: #d4d0c8;
  border: 1px solid;
  border-color: #fff #444 #444 #fff;
  box-sizing: border-box;
  position: relative;
  display: block;
}
.tb-min { position: absolute; left: 4px; bottom: 1px; width: 6px; height: 3px; background: #111; }
.tb-max { position: absolute; left: 3px; top: 0; width: 9px; height: 11px; border: 1px solid #111; border-top-width: 3px; box-sizing: border-box; }
.tb-x { font: 700 13px/14px "Liberation Sans", sans-serif; text-align: center; color: #111; }

.menubar {
  margin-top: 1px;
  height: 28px;
  flex: none;
  box-sizing: border-box;
  width: 1428px;
  border: 1px solid #a0a098;
  border-bottom: 2px solid #888;
  display: flex;
  align-items: center;
  padding-left: 13px;
  font-size: 15px;
}
.menu { flex: none; white-space: nowrap; }
.menu:nth-child(1) { width: 37px; }
.menu:nth-child(2) { width: 39px; }
.menu:nth-child(3) { width: 45px; }
.menu:nth-child(4) { width: 52px; }
.menu:nth-child(5) { width: 57px; }
.menu:nth-child(6) { width: 49px; }
.menu:nth-child(7) { width: 59px; }
.menu:nth-child(8) { width: 65px; }
.menu:nth-child(9) { width: 41px; }
.menu:nth-child(10) { width: 88px; }
.menu:nth-child(11) { width: 47px; }
.menu:nth-child(12) { width: 63px; }

.toolbars { height: 105px; flex: none; padding: 0 0 0 15px; box-sizing: border-box; }
.tbar { height: 34.4px; display: flex; align-items: center; }
.cell {
  width: 34.2px;
  height: 34px;
  flex: none;
  display: flex;
  align-items: center;
  justify-content: center;
  box-sizing: border-box;
}
.cell.sel, .stool.sel {
  background: #eeeeea;
  border: 1px solid #b4b4ac;
  border-radius: 4px;
}
.ico { width: 24px; height: 24px; }
.tall { width: 26px; height: 32px; margin-top: 2px; }
.vsep { width: 14px; height: 33px; flex: none; background: repeating-linear-gradient(#aaa 0 2px, #f4f4f0 2px 4px) center / 2px 100% no-repeat; }
.chev { width: 12px; flex: none; text-align: center; font-size: 15px; line-height: 10px; font-weight: 700; color: #222; }
.bar-text { font-size: 14.5px; flex: none; color: #333; }
.bar-value { margin-left: 7px; width: 45px; }
.bar-text:not(.bar-value) { width: 112px; }
.spinner {
  margin-left: 1px;
  width: 52px;
  height: 23px;
  flex: none;
  display: flex;
  box-sizing: border-box;
  border: 1px solid #b0b0a8;
  background: #e8ebe6;
  color: #aaa;
  font-size: 15px;
  line-height: 21px;
}
.spin-val { flex: 1; padding-left: 4px; }
.spin-btns { width: 16px; border-left: 1px solid #b0b0a8; display: flex; flex-direction: column; background: #d8d8d0; }
.spin-btns i { font-style: normal; flex: 1; font-size: 9px; line-height: 10px; text-align: center; color: #999; }
.led {
  width: 10px;
  height: 16px;
  margin-left: 5px;
  flex: none;
  background: radial-gradient(circle, #18e018 0 3px, #c4c4bc 3.5px);
}
.fl { width: 24px; flex: none; margin-left: 5px; font-size: 14px; color: #333; }

.main { flex: none; display: flex; height: 950px; }

.panel { width: 281px; flex: none; display: flex; flex-direction: column; padding-left: 6px; box-sizing: border-box; }
.tabs { height: 36px; flex: none; display: flex; gap: 1px; align-items: flex-end; }
.tab {
  width: 37px;
  height: 33px;
  box-sizing: border-box;
  border: 1px solid #c0c0b8;
  border-bottom: 0;
  border-radius: 4px 4px 0 0;
  display: flex;
  align-items: center;
  justify-content: center;
}
.tab.on { width: 42px; height: 36px; background: #dcdcd4; border-color: #f0f0ea #b0b0a8 transparent #f0f0ea; }
.ico-tab { width: 25px; height: 25px; }
.panel-body {
  flex: 1;
  min-height: 0;
  display: flex;
  flex-direction: column;
  border: 1px solid #a8a8a0;
  border-right-width: 2px;
  border-left: 2px solid #c0c0b8;
  border-bottom-width: 2px;
  padding-left: 1px;
  padding-top: 1px;
  width: 273px;
  box-sizing: border-box;
}
.btnrow { height: 25px; flex: none; display: flex; gap: 1px; }
.pbtn {
  height: 25px;
  box-sizing: border-box;
  border: 1px solid #b0b0a8;
  border-bottom-color: #888;
  border-radius: 3px;
  font-size: 14.5px;
  line-height: 23px;
  white-space: nowrap;
  display: flex;
}
.pbtn b { font-weight: 700; position: relative; top: -3px; }
.pbtn-show { width: 79px; padding-left: 21px; gap: 0; }
.pbtn-show b { margin-left: -6px; }
.pbtn-set { width: 92px; padding-left: 23px; }
.pbtn-set b { margin-left: -5px; }

.thead { margin-top: 1px; height: 19px; flex: none; display: flex; background: #d4d4cc; border: 1px solid; border-color: #f4f4f0 #888 #888 #f4f4f0; box-sizing: border-box; width: 268px; }
.th { height: 100%; border-right: 1px solid #888; font-size: 14.5px; line-height: 18px; padding-left: 2px; box-sizing: border-box; white-space: nowrap; overflow: hidden; flex: none; }
.th-tree { width: 88px; }
.th-num { width: 43px; }
.th-id { width: 43px; }
.th-name { width: 91px; border-right: 0; }

.list { flex: 1; min-height: 0; display: flex; background: #fff; width: 268px; font-size: 15px; }
.tree { width: 87px; flex: none; overflow: hidden; }
.root { height: 24px; line-height: 25px; padding-left: 4px; width: 83px; white-space: nowrap; overflow: hidden; }
.tree-rows { margin-left: 13px; position: relative; }
.tree-rows::before { content: ""; position: absolute; left: 0; top: 0; bottom: 11px; border-left: 1px dotted #aaa; }
.trow { height: 22.07px; display: flex; align-items: center; position: relative; }
.trow::before { content: ""; position: absolute; left: 1px; top: 50%; width: 13px; border-top: 1px dotted #aaa; }
.ico-row { width: 21px; height: 21px; margin-left: 13px; flex: none; }
.tname { margin-left: 13px; width: 24px; white-space: nowrap; overflow: hidden; flex: none; }
.cols { flex: 1; border-left: 2px solid #999; overflow: hidden; }
.root-gap { height: 24px; }
.crow { height: 22.07px; line-height: 22px; display: flex; white-space: nowrap; }
.c-num { width: 45px; padding-left: 3px; box-sizing: border-box; flex: none; }
.c-id { width: 43px; flex: none; }
.c-name { flex: 1; }

.hscrolls { height: 18px; flex: none; display: flex; width: 268px; }
.hs { display: flex; height: 18px; background: #f2f2ea; }
.hs-left { width: 88px; }
.hs-right { flex: 1; border-left: 2px solid #999; background: #e0e4dc; }
.sb {
  width: 16px;
  height: 18px;
  flex: none;
  box-sizing: border-box;
  background: #d4d4cc;
  border: 1px solid #a8a8a0;
  border-radius: 3px;
  font-size: 19px;
  font-weight: 700;
  line-height: 13px;
  text-align: center;
  color: #222;
  overflow: hidden;
}
.sb.dim { color: #aaa; }
.sb.thumb { width: 11px; }
.track { flex: 1; }

.splitter { width: 20px; flex: none; display: flex; margin-right: 1px; }
.lane { display: flex; flex-direction: column; align-items: center; }
.lane-a { width: 11px; padding-top: 283px; }
.lane-b { width: 9px; padding-top: 411px; border-left: 1px solid #aaa; border-right: 1px solid #aaa; }
.grip { width: 7px; height: 52px; background: radial-gradient(circle, #aaa 0 1px, transparent 1.2px) 0 0 / 3px 3px; flex: none; }
.lch { height: 13px; font-size: 20px; font-weight: 700; line-height: 12px; color: #1018b0; flex: none; }
.lane-gap { height: 130px; flex: none; }
.bluegrip { height: 106px; width: 2px; flex: none; background: repeating-linear-gradient(#3038b0 0 2px, transparent 2px 4px); }

.drawing { display: block; flex: none; background: #00102f; width: 1080px; height: 950px; }
.cad { font-family: Roboto, "Liberation Sans", sans-serif; font-weight: 300; }
.cad-foot { font-family: "Liberation Sans", sans-serif; font-size: 14px; fill: #e4e4e4; }

.sidetools { flex: 1; display: flex; flex-direction: column; padding-left: 1px; }
.sgrip { width: 46px; margin-left: 2px; background: repeating-linear-gradient(90deg, #fff 0 3px, #a8a8a0 3px 5px) center / 100% 2px no-repeat; flex: none; }
.sgrip.g1 { height: 9px; }
.sgrip.g2 { height: 13px; }
.sgrip.g3 { height: 12px; }
.stool {
  height: 34.4px;
  width: 34px;
  flex: none;
  display: flex;
  align-items: center;
  justify-content: center;
  position: relative;
  box-sizing: border-box;
}
.stool em { position: absolute; left: 36px; top: 5px; font: 700 18px/20px "Liberation Sans", sans-serif; color: #333; }
.ico-side { width: 27px; height: 27px; flex: none; }

.msgs { height: 74px; margin-top: 5px; flex: none; display: flex; padding-left: 5px; }
.msg-list { width: 1397px; background: #e6eae6; padding-top: 11px; box-sizing: border-box; border-bottom: 2px solid #999; }
.msg { height: 20px; display: flex; align-items: center; font-size: 15px; padding-left: 9px; gap: 2px; }
.msg-arrow { width: 14px; height: 16px; flex: none; margin-left: 1px; }
.dot { width: 7px; height: 7px; border-radius: 50%; background: #1020d0; margin: 0 3px 0 3px; flex: none; }
.vscroll { width: 19px; display: flex; flex-direction: column; border-bottom: 2px solid #999; }
.vscroll .sb { width: 18px; height: 19px; line-height: 26px; font-size: 22px; }
.vscroll .sb.dn { line-height: 9px; }
.vtrack { flex: 1; background: #f2f2ea; }
.vthumb { height: 10px; background: #d4d4cc; border: 1px solid #a8a8a0; border-radius: 3px; width: 18px; box-sizing: border-box; }

.status { flex: 1; display: flex; align-items: flex-start; padding-top: 2px; }
.stat-cell { width: 1079px; height: 25px; border-right: 1px solid #999; flex: none; }
.combo {
  margin-left: 120px;
  margin-top: 1px;
  width: 186px;
  height: 23px;
  box-sizing: border-box;
  border: 1px solid #888;
  background: #fff;
  display: flex;
  font-size: 15px;
  line-height: 21px;
  padding-left: 5px;
}
.combo span { flex: 1; }
.combo .sq { flex: none; }
.combo b { width: 20px; background: #d8d8d0; border-left: 1px solid #999; text-align: center; color: #666; line-height: 12px; }

.taskbar {
  height: 28px;
  flex: none;
  background: #d4d0c8;
  border-top: 2px solid #f4f4f0;
  box-sizing: border-box;
  display: flex;
  align-items: flex-end;
  padding-left: 5px;
  font-size: 15px;
}
.start {
  width: 64px;
  height: 24px;
  box-sizing: border-box;
  border: 1px solid;
  border-color: #fff #444 transparent #fff;
  padding-top: 3px;
  font: 700 14px/22px "Liberation Sans", sans-serif;
  color: #111;
  display: flex;
  align-items: center;
  flex: none;
}
.start-txt { margin-left: 5px; }
.ico-q { width: 19px; height: 20px; flex: none; }
.tsep { width: 3px; height: 22px; margin: 0 4px 0 8px; border-left: 1px solid #888; border-right: 1px solid #fff; flex: none; }
.quick { display: flex; align-items: center; gap: 8.5px; height: 24px; flex: none; width: 126px; margin-left: 5px; padding-top: 3px; box-sizing: border-box; }
.quick .more { font-weight: 700; font-size: 17px; line-height: 18px; color: #222; margin-left: 6px; position: relative; top: -4px; }
.task {
  height: 24px;
  box-sizing: border-box;
  border: 1px solid;
  border-color: #fff #777 transparent #fff;
  padding-top: 3px;
  display: flex;
  align-items: center;
  gap: 2px;
  width: 194px;
  margin-right: 5px;
  padding-left: 4px;
  white-space: nowrap;
  overflow: hidden;
  flex: none;
  font-size: 15px;
}
.task.active {
  background: #eeeee8;
  border-color: #444 #fff transparent #444;
  color: #111;
  gap: 1px;
  width: 195px;
}
.sq-b {
  display: inline-block;
  font-weight: 700;
  font-size: 15px;
  transform: scaleX(0.92);
  transform-origin: 0 50%;
}
.task.wide { width: 196px; }
.tray {
  margin-left: auto;
  margin-right: 4px;
  width: 224px;
  height: 24px;
  box-sizing: border-box;
  border: 1px solid;
  border-color: #888 #fff transparent #888;
  padding-top: 3px;
  display: flex;
  align-items: center;
  padding-left: 1px;
  gap: 3px;
  flex: none;
}
.ico-t { width: 20px; height: 20px; flex: none; }
.tray-de { width: 20px; height: 20px; background: #10109c; color: #fff; padding-left: 3px; box-sizing: border-box; font-size: 15px; line-height: 20px; flex: none; }
.tray-za { width: 20px; height: 20px; display: flex; flex: none; font-size: 14px; line-height: 20px; text-align: center; font-weight: 700; }
.tray-za i { font-style: normal; flex: 1; background: #901018; color: #fff; }
.tray-za b { flex: 1; background: #f4e418; color: #901018; }
.clock { margin-left: 12px; font-size: 15px; }
</style>
